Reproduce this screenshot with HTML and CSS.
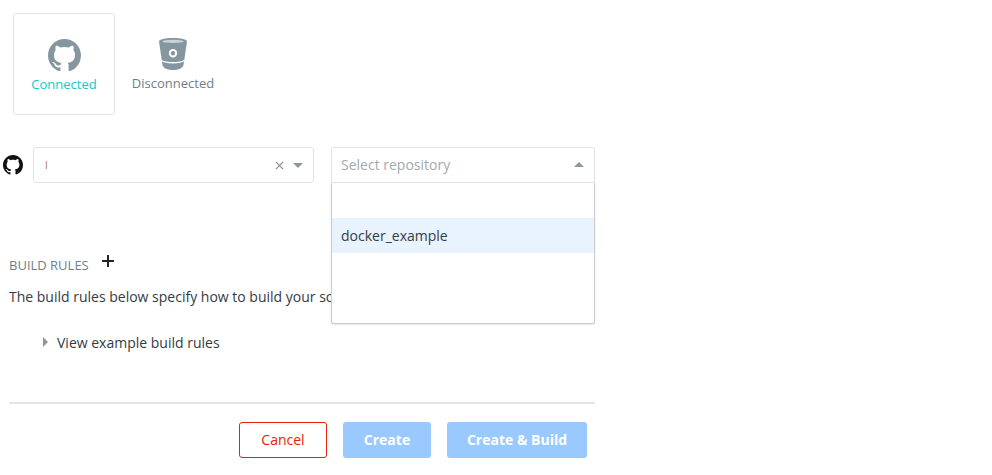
FILE: index.html
```html
<!DOCTYPE html>
<html lang="en">
<head>
    <meta charset="UTF-8">
    <meta name="viewport" content="width=device-width, initial-scale=1.0">
    <title>Create build</title>
    <link rel="stylesheet" href="styles.css">
</head>
<body>
    <div class="form">
        <div class="providers">
            <div class="provider active">
                <svg class="provider-icon" viewBox="0 0 16 15.5"><path d="M8 0C3.58 0 0 3.58 0 8c0 3.54 2.29 6.53 5.47 7.59.4.07.55-.17.55-.38 0-.19-.01-.82-.01-1.49-2.01.37-2.53-.49-2.69-.94-.09-.23-.48-.94-.82-1.13-.28-.15-.68-.52-.01-.53.63-.01 1.08.58 1.23.82.72 1.21 1.87.87 2.33.66.07-.52.28-.87.51-1.07-1.78-.2-3.64-.89-3.64-3.95 0-.87.31-1.59.82-2.15-.08-.2-.36-1.02.08-2.12 0 0 .67-.21 2.2.82.64-.18 1.32-.27 2-.27.68 0 1.36.09 2 .27 1.53-1.04 2.2-.82 2.2-.82.44 1.1.16 1.92.08 2.12.51.56.82 1.27.82 2.15 0 3.07-1.87 3.75-3.65 3.95.29.25.54.73.54 1.48 0 1.07-.01 1.93-.01 2.2 0 .21.15.46.55.38A8.013 8.013 0 0016 8c0-4.42-3.58-8-8-8z"/></svg>
                <span>Connected</span>
            </div>
            <div class="provider">
                <svg class="provider-icon bucket" viewBox="0 0 28 32">
                    <path d="M14 0C6 0 0 1.300 0 3.500L3.500 27C4 30 9 32 14 32S24 30 24.500 27L28 3.500C28 1.300 22 0 14 0Z"/>
                    <ellipse class="bucket-rim" cx="14" cy="3.400" rx="10.500" ry="1.700"/>
                    <path class="bucket-band" d="M2.600 22.500C7 25.500 21 25.500 25.400 22.500"/>
                    <circle class="bucket-ring" cx="14" cy="15.300" r="3.200"/>
                </svg>
                <span>Disconnected</span>
            </div>
        </div>

        <div class="source-row">
            <svg class="source-icon" viewBox="0 0 16 16"><path d="M8 0C3.58 0 0 3.58 0 8c0 3.54 2.29 6.53 5.47 7.59.4.07.55-.17.55-.38 0-.19-.01-.82-.01-1.49-2.01.37-2.53-.49-2.69-.94-.09-.23-.48-.94-.82-1.13-.28-.15-.68-.52-.01-.53.63-.01 1.08.58 1.23.82.72 1.21 1.87.87 2.33.66.07-.52.28-.87.51-1.07-1.78-.2-3.64-.89-3.64-3.95 0-.87.31-1.59.82-2.15-.08-.2-.36-1.02.08-2.12 0 0 .67-.21 2.2.82.64-.18 1.32-.27 2-.27.68 0 1.36.09 2 .27 1.53-1.04 2.2-.82 2.2-.82.44 1.1.16 1.92.08 2.12.51.56.82 1.27.82 2.15 0 3.07-1.87 3.75-3.65 3.95.29.25.54.73.54 1.48 0 1.07-.01 1.93-.01 2.2 0 .21.15.46.55.38A8.013 8.013 0 0016 8c0-4.42-3.58-8-8-8z"/></svg>
            <div class="select org-select">
                <span class="select-value">I</span>
                <svg class="clear" viewBox="0 0 10 10"><path d="M1 1l8 8M9 1l-8 8"/></svg>
                <span class="arrow"></span>
            </div>
            <div class="select-wrap">
                <div class="select repo-select">
                    <span class="placeholder">Select repository</span>
                    <span class="arrow up"></span>
                </div>
                <div class="menu">
                    <div class="menu-item">docker_example</div>
                </div>
            </div>
        </div>

        <div class="rules-head">
            <span class="rules-title">BUILD RULES</span>
            <span class="plus"></span>
        </div>
        <p class="rules-desc">The build rules below specify how to build your source into Docker images.</p>
        <div class="example-toggle">
            <span class="caret"></span>
            <span>View example build rules</span>
        </div>

        <div class="actions">
            <button class="btn btn-cancel">Cancel</button>
            <button class="btn btn-primary">Create</button>
            <button class="btn btn-primary wide">Create &amp; Build</button>
        </div>
    </div>
</body>
</html>
```

FILE: styles.css
```css
* {
    margin: 0;
    padding: 0;
    box-sizing: border-box;
    font-family: 'Open Sans', sans-serif;
}

body {
    background: white;
    color: #333c44;
    font-size: 14px;
}

.form {
    width: 595px;
    padding-top: 13px;
    padding-left: 3px;
}

.providers {
    display: flex;
    gap: 7px;
    margin-left: 10px;
}

.provider {
    width: 102px;
    height: 102px;
    display: flex;
    flex-direction: column;
    align-items: center;
    padding-top: 25px;
    border: 1px solid transparent;
    border-radius: 3px;
    color: #6f7e8c;
    font-size: 13px;
    line-height: 18px;
}

.provider.active {
    border-color: #e1e4e7;
    color: #14c8c8;
}

.provider-icon {
    width: 33px;
    height: 32px;
    fill: #85969f;
    margin-bottom: 4px;
}

.provider-icon.bucket {
    width: 28px;
    height: 32px;
    margin-top: -1px;
}

.bucket-rim {
    fill: #c9d2d6;
}

.bucket-band {
    fill: none;
    stroke: white;
    stroke-width: 1.5;
}

.bucket-ring {
    stroke: white;
    stroke-width: 2;
}

.source-row {
    display: flex;
    align-items: center;
    margin-top: 32px;
}

.source-icon {
    width: 20px;
    height: 20px;
    fill: #111;
    margin-right: 10px;
}

.select {
    height: 36px;
    display: flex;
    align-items: center;
    border: 1px solid #e1e4e7;
    border-radius: 3px;
    background: white;
}

.org-select {
    width: 281px;
    padding: 0 10px 0 11px;
    margin-right: 17px;
}

.select-value {
    flex: 1;
    font-size: 10px;
    color: #a9764a;
}

.clear {
    width: 9px;
    height: 9px;
    fill: none;
    stroke: #7f8c96;
    stroke-width: 1.3;
    margin-right: 9px;
}

.arrow {
    width: 0;
    height: 0;
    border-left: 5px solid transparent;
    border-right: 5px solid transparent;
    border-top: 5px solid #8c979f;
}

.arrow.up {
    border-top: none;
    border-bottom: 5px solid #8c979f;
}

.select-wrap {
    position: relative;
    width: 264px;
}

.repo-select {
    padding: 0 10px 2px 9px;
    border-bottom-left-radius: 0;
    border-bottom-right-radius: 0;
}

.placeholder {
    flex: 1;
    color: #a3a9ad;
}

.menu {
    position: absolute;
    top: 36px;
    left: 0;
    right: 0;
    height: 141px;
    padding-top: 35px;
    background: white;
    border: 1px solid #c8ccd0;
    border-top: none;
    border-radius: 0 0 3px 3px;
    box-shadow: 0 1px 2px rgba(0, 0, 0, 0.1);
}

.menu-item {
    height: 35px;
    line-height: 35px;
    padding-left: 9px;
    background: #e8f3fd;
}

.rules-head {
    display: flex;
    align-items: flex-start;
    margin-top: 70px;
    margin-left: 6px;
    height: 24px;
}

.rules-title {
    font-size: 13px;
    line-height: 24px;
    color: #6f7e8c;
}

.plus {
    position: relative;
    width: 12px;
    height: 12px;
    margin-left: 13px;
    margin-top: 2px;
}

.plus::before,
.plus::after {
    content: '';
    position: absolute;
    background: #222;
}

.plus::before {
    left: 0;
    right: 0;
    top: 5px;
    height: 2px;
}

.plus::after {
    top: 0;
    bottom: 0;
    left: 5px;
    width: 2px;
}

.rules-desc {
    margin-left: 6px;
    margin-top: 10px;
    line-height: 20px;
    white-space: nowrap;
}

.example-toggle {
    display: flex;
    align-items: center;
    margin-top: 26px;
    margin-left: 40px;
    line-height: 20px;
}

.caret {
    width: 0;
    height: 0;
    border-top: 5px solid transparent;
    border-bottom: 5px solid transparent;
    border-left: 5px solid #8c979f;
    margin-right: 9px;
    margin-bottom: 2px;
}

.actions {
    display: flex;
    justify-content: flex-end;
    gap: 16px;
    margin-top: 49px;
    margin-left: 6px;
    padding: 18px 8px 0 0;
    border-top: 2px solid #e1e5e9;
}

.btn {
    width: 88px;
    height: 36px;
    padding-bottom: 2px;
    border: none;
    border-radius: 3px;
    font-size: 14px;
}

.btn-cancel {
    background: white;
    border: 1px solid #e52207;
    color: #e52207;
}

.btn-primary {
    background: #99c9ff;
    color: white;
    font-weight: 700;
}

.btn-primary.wide {
    width: 140px;
}
```
